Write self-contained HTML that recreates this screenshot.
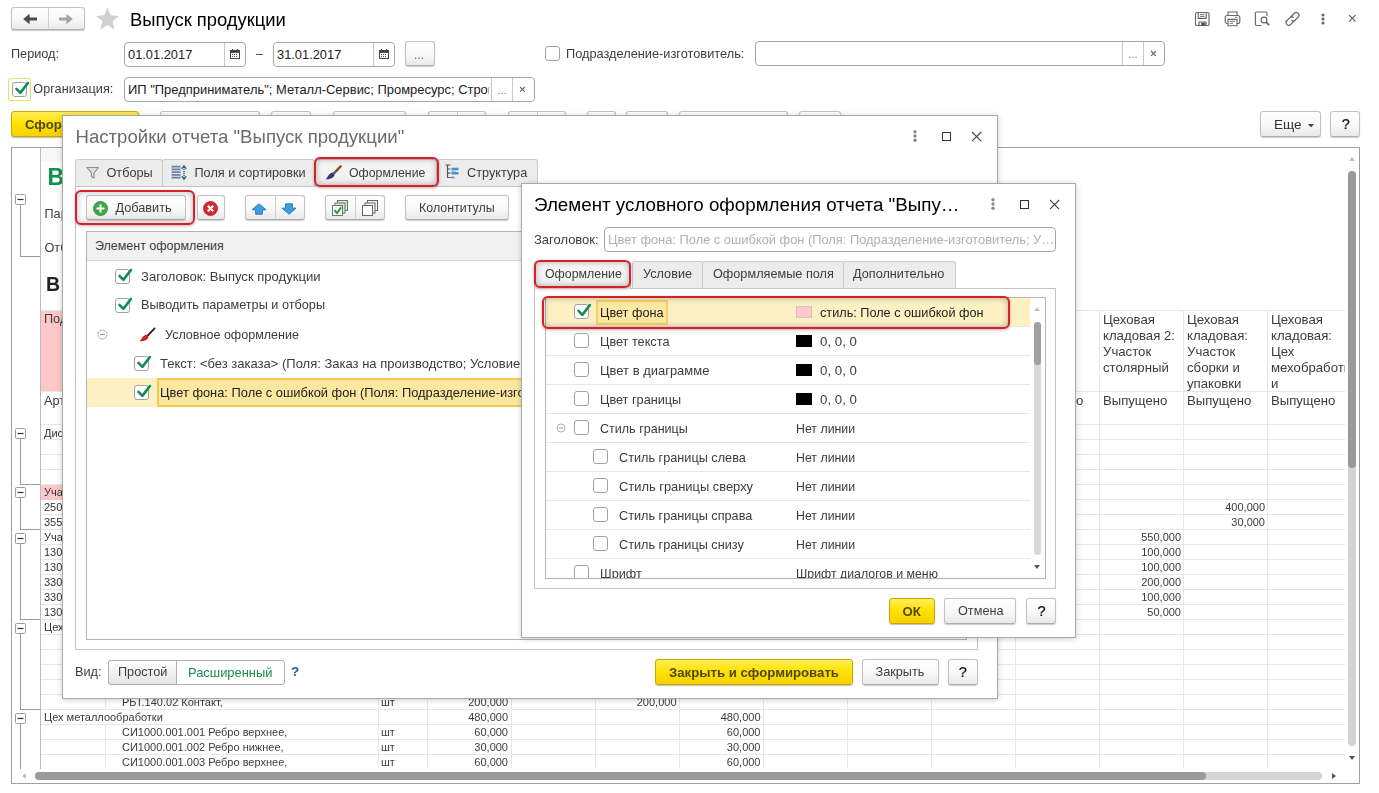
<!DOCTYPE html><html lang="ru"><head><meta charset="utf-8"><title>Выпуск продукции</title><style>
html,body{margin:0;padding:0;}
body{transform:translateZ(0);width:1379px;height:793px;overflow:hidden;background:#fff;position:relative;font-family:"Liberation Sans",sans-serif;font-size:12.7px;color:#3c3c3c;}
.a{position:absolute;box-sizing:border-box;}
.t{position:absolute;white-space:nowrap;}
.btn{position:absolute;box-sizing:border-box;border:1px solid #c2c2c2;border-bottom-color:#adadad;border-radius:3px;background:linear-gradient(#ffffff 0%,#f8f8f8 55%,#e9e9e9 100%);box-shadow:0 1px 1px rgba(0,0,0,.2);text-align:center;white-space:nowrap;}
.ybtn{position:absolute;box-sizing:border-box;border:1px solid #c9a800;border-radius:3px;background:linear-gradient(#ffee58 0%,#ffe205 45%,#f6d100 100%);box-shadow:0 1px 1px rgba(0,0,0,.25);text-align:center;white-space:nowrap;font-weight:bold;color:#54480a;}
.inp{position:absolute;box-sizing:border-box;border:1px solid #a6a6a6;border-radius:4px;background:#fff;}
.cb{position:absolute;box-sizing:border-box;border:1px solid #a2a2a2;border-radius:3px;background:#fff;width:15px;height:15px;}
.dlg{position:absolute;box-sizing:border-box;background:#fff;border:1px solid #a9a9a9;box-shadow:0 1px 6px rgba(0,0,0,.2);}
.tab{position:absolute;box-sizing:border-box;border:1px solid #cbcbcb;border-bottom:none;border-radius:3px 3px 0 0;background:#ececec;}
.red{position:absolute;box-sizing:border-box;border:2px solid #d2232a;border-radius:6px;box-shadow:0 1px 3px rgba(120,0,0,.35), inset 0 0 6px rgba(0,0,0,.3);}
.hl{position:absolute;height:1px;background:#e7e7e7;}
.vl{position:absolute;width:1px;background:#e7e7e7;}
.s{font-size:11px;}
</style></head><body>
<div class="btn" style="left:11px;top:7px;width:74px;height:23px;"></div>
<div class="a" style="left:48px;top:8px;width:1px;height:21px;background:#d0d0d0"></div>
<svg class="a" style="left:22px;top:12px" width="16" height="14" viewBox="0 0 16 14"><path d="M6 7 H15" stroke="#4a4a4a" stroke-width="3" fill="none"/><path d="M1.2 7 L7.6 1.8 V12.2 Z" fill="#4a4a4a"/></svg>
<svg class="a" style="left:58px;top:12px" width="16" height="14" viewBox="0 0 16 14"><path d="M1 7 H10" stroke="#a4a4a4" stroke-width="3" fill="none"/><path d="M14.8 7 L8.4 1.8 V12.2 Z" fill="#a4a4a4"/></svg>
<svg class="a" style="left:95px;top:7.3px" width="25" height="23" viewBox="0 0 25 23"><path d="M12.5 0.5 L15.6 8.3 L24 8.9 L17.5 14.3 L19.6 22.5 L12.5 18 L5.4 22.5 L7.5 14.3 L1 8.9 L9.4 8.3 Z" fill="#cfcfcf"/></svg>
<div class="t" style="left:130px;top:7.5px;font-size:18.4px;line-height:24px;color:#000">Выпуск продукции</div>
<svg class="a" style="left:1194px;top:10.5px" width="16" height="16" viewBox="0 0 16 16" fill="none" stroke="#686868" stroke-width="1.15"><rect x="1.5" y="1.5" width="13.5" height="13" rx="1.3"/><path d="M4.3 1.5 V7.3 H12.2 V1.5"/><path d="M6 3.6 H10.5 M6 5.4 H10.5" stroke-width="0.9"/><path d="M5 14.5 V11 H12 V14.5"/><rect x="7.2" y="11.6" width="4.2" height="2.9" fill="#555" stroke="none"/></svg>
<svg class="a" style="left:1224px;top:10.5px" width="17" height="16" viewBox="0 0 17 16" fill="none" stroke="#686868" stroke-width="1.15"><path d="M4 4.5 V1 H13 V4.5"/><rect x="1.2" y="4.5" width="14.6" height="8" rx="2"/><path d="M4 12.5 V8.3 H13 V14.7 H4 Z" fill="#fff"/><path d="M5.8 10.3 H11.2 M5.8 12.3 H9" stroke-width="0.9"/><path d="M11.2 6.3 H13.6" stroke-width="0.9"/></svg>
<svg class="a" style="left:1254px;top:10.5px" width="17" height="16" viewBox="0 0 17 16" fill="none" stroke="#686868" stroke-width="1.15"><path d="M13 5 V2.2 a1.2 1.2 0 0 0 -1.2 -1.2 H2.6 a1.2 1.2 0 0 0 -1.2 1.2 V13.3 a1.2 1.2 0 0 0 1.2 1.2 H7.5"/><circle cx="10" cy="9" r="2.9"/><path d="M12.2 11.2 L15 14.2" stroke-width="1.9"/></svg>
<svg class="a" style="left:1284px;top:10.5px" width="17" height="16" viewBox="0 0 17 16" fill="none" stroke="#686868" stroke-width="1.25" stroke-linecap="round"><path d="M6.2 6.4 L10.4 2.2 a2.55 2.55 0 0 1 3.6 0 l0.2 .2 a2.55 2.55 0 0 1 0 3.6 L11 9.2 a2.55 2.55 0 0 1 -3.3 .25"/><path d="M10.6 9.6 L6.6 13.6 a2.55 2.55 0 0 1 -3.6 0 l-.2 -.2 a2.55 2.55 0 0 1 0 -3.6 L6 6.6 a2.55 2.55 0 0 1 3.3 -.25"/></svg>
<svg class="a" style="left:1319.5px;top:10.5px" width="6" height="16" viewBox="0 0 6 16"><circle cx="3" cy="4" r="1.6" fill="#6a6a6a"/><circle cx="3" cy="8" r="1.6" fill="#6a6a6a"/><circle cx="3" cy="12" r="1.6" fill="#6a6a6a"/></svg>
<svg class="a" style="left:1347.2px;top:13.2px" width="10.6" height="10.6" viewBox="0 0 10.6 10.6"><path d="M2 2 L8.6 8.6 M8.6 2 L2 8.6" stroke="#666" stroke-width="1.2" fill="none"/></svg>
<div class="t" style="left:11px;top:45.5px;font-size:12.7px;line-height:17px;">Период:</div>
<div class="inp" style="left:124px;top:42px;width:121.7px;height:24.5px;"></div>
<div class="a" style="left:224px;top:42.5px;width:1px;height:23.5px;background:#c8c8c8"></div>
<div class="t" style="left:128px;top:45.5px;font-size:12.85px;line-height:17px;color:#222">01.01.2017</div>
<svg class="a" style="left:229.5px;top:49px" width="10" height="10" viewBox="0 0 10 10"><rect x="0.5" y="1.5" width="9" height="8" fill="#fff" stroke="#444" stroke-width="1"/><rect x="0.5" y="1.5" width="9" height="2.4" fill="#444"/><path d="M2.5 0 V2 M7.5 0 V2" stroke="#444" stroke-width="1.2"/><path d="M2 5.4 H8 M2 7.4 H8" stroke="#444" stroke-width="1" stroke-dasharray="1 1"/></svg>
<div class="t" style="left:256px;top:45.5px;font-size:12.7px;line-height:17px;">–</div>
<div class="inp" style="left:273px;top:42px;width:121.5px;height:24.5px;"></div>
<div class="a" style="left:373px;top:42.5px;width:1px;height:23.5px;background:#c8c8c8"></div>
<div class="t" style="left:277px;top:45.5px;font-size:12.85px;line-height:17px;color:#222">31.01.2017</div>
<svg class="a" style="left:378.5px;top:49px" width="10" height="10" viewBox="0 0 10 10"><rect x="0.5" y="1.5" width="9" height="8" fill="#fff" stroke="#444" stroke-width="1"/><rect x="0.5" y="1.5" width="9" height="2.4" fill="#444"/><path d="M2.5 0 V2 M7.5 0 V2" stroke="#444" stroke-width="1.2"/><path d="M2 5.4 H8 M2 7.4 H8" stroke="#444" stroke-width="1" stroke-dasharray="1 1"/></svg>
<div class="btn" style="left:405px;top:41px;width:29.5px;height:25px;"></div>
<div class="t" style="left:414px;top:46.5px;font-size:12px;line-height:16px;color:#777">...</div>
<div class="cb" style="left:545px;top:46px;width:15px;height:15px;"></div>
<div class="t" style="left:566px;top:45.5px;font-size:12.7px;line-height:17px;transform:scaleX(1.007);transform-origin:0 50%">Подразделение-изготовитель:</div>
<div class="inp" style="left:755px;top:41px;width:410px;height:24.5px;"></div>
<div class="a" style="left:1122px;top:42px;width:1px;height:22.5px;background:#c8c8c8"></div>
<div class="a" style="left:1143px;top:42px;width:1px;height:22.5px;background:#c8c8c8"></div>
<div class="t" style="left:1128.5px;top:47.0px;font-size:11px;line-height:14px;color:#777">...</div>
<svg class="a" style="left:1149.3px;top:48.9px" width="8.8" height="8.8" viewBox="0 0 8.8 8.8"><path d="M2 2 L6.800000000000001 6.800000000000001 M6.800000000000001 2 L2 6.800000000000001" stroke="#666" stroke-width="1.1" fill="none"/></svg>
<div class="a" style="left:8px;top:78px;width:23px;height:23px;border:1px solid #e6dc78;background:#fffef2;border-radius:2px"></div>
<div class="cb" style="left:12px;top:82px;width:15px;height:15px;"><svg class="a" style="left:-1px;top:-4px" width="19" height="19" viewBox="0 0 19 19"><path d="M4.5 9.9 L8.4 13.9 L15.9 4" fill="none" stroke="#118a58" stroke-width="2.6" stroke-linecap="round" stroke-linejoin="round"/></svg></div>
<div class="t" style="left:33.3px;top:81.0px;font-size:12.7px;line-height:17px;">Организация:</div>
<div class="inp" style="left:124px;top:77px;width:410.5px;height:24.5px;"></div>
<div class="a" style="left:491px;top:78px;width:1px;height:22.5px;background:#c8c8c8"></div>
<div class="a" style="left:512px;top:78px;width:1px;height:22.5px;background:#c8c8c8"></div>
<div class="t" style="left:128px;top:81px;width:361px;overflow:hidden;font-size:12.95px;line-height:17px;color:#222">ИП "Предприниматель"; Металл-Сервис; Промресурс; Строй</div>
<div class="t" style="left:497.5px;top:82.5px;font-size:11px;line-height:14px;color:#777">...</div>
<svg class="a" style="left:518.3000000000001px;top:84.89999999999999px" width="8.8" height="8.8" viewBox="0 0 8.8 8.8"><path d="M2 2 L6.800000000000001 6.800000000000001 M6.800000000000001 2 L2 6.800000000000001" stroke="#666" stroke-width="1.1" fill="none"/></svg>
<div class="ybtn" style="left:11px;top:111px;width:127.5px;height:26px;"></div>
<div class="t" style="left:25px;top:115.5px;font-size:13.2px;line-height:17px;font-weight:bold;color:#54480a">Сформировать</div>
<div class="btn" style="left:160px;top:111px;width:100px;height:25px;"></div>
<div class="btn" style="left:271px;top:111px;width:40px;height:25px;"></div>
<div class="btn" style="left:332.5px;top:111px;width:73.5px;height:25px;"></div>
<div class="btn" style="left:427.5px;top:111px;width:58.5px;height:25px;"></div>
<div class="a" style="left:457px;top:112px;width:1px;height:23px;background:#d0d0d0"></div>
<div class="btn" style="left:507.5px;top:111px;width:58.5px;height:25px;"></div>
<div class="a" style="left:537px;top:112px;width:1px;height:23px;background:#d0d0d0"></div>
<div class="btn" style="left:587px;top:111px;width:29px;height:25px;"></div>
<div class="btn" style="left:626px;top:111px;width:41.5px;height:25px;"></div>
<div class="btn" style="left:679px;top:111px;width:109px;height:25px;"></div>
<div class="btn" style="left:799px;top:111px;width:41.5px;height:25px;"></div>
<div class="btn" style="left:1260px;top:111px;width:61px;height:26px;"></div>
<div class="t" style="left:1274px;top:115.5px;font-size:13.6px;line-height:18px;color:#333">Еще</div>
<svg class="a" style="left:1308px;top:123.7px" width="6" height="3.6" viewBox="0 0 7 4"><path d="M0 0 H7 L3.5 4 Z" fill="#444"/></svg>
<div class="btn" style="left:1330px;top:111px;width:30px;height:26px;"></div>
<div class="t" style="left:1341.7px;top:115.3px;font-size:14.6px;line-height:19px;font-weight:normal;color:#111;-webkit-text-stroke:0.22px #111">?</div>
<div class="a" style="left:11px;top:147px;width:1349px;height:636.5px;border:1px solid #a0a0a0;background:#fff"></div>
<div class="a" style="left:41px;top:148px;width:60px;height:14px;background:#f8f8f8"></div>
<div class="a" style="left:40px;top:148px;width:1px;height:621px;background:#bcbcbc"></div>
<div class="hl" style="left:41px;top:424px;width:1304px"></div>
<div class="hl" style="left:41px;top:439px;width:1304px"></div>
<div class="hl" style="left:41px;top:454px;width:1304px"></div>
<div class="hl" style="left:41px;top:469px;width:1304px"></div>
<div class="hl" style="left:41px;top:484px;width:1304px"></div>
<div class="hl" style="left:41px;top:499px;width:1304px"></div>
<div class="hl" style="left:41px;top:514px;width:1304px"></div>
<div class="hl" style="left:41px;top:529px;width:1304px"></div>
<div class="hl" style="left:41px;top:544px;width:1304px"></div>
<div class="hl" style="left:41px;top:559px;width:1304px"></div>
<div class="hl" style="left:41px;top:574px;width:1304px"></div>
<div class="hl" style="left:41px;top:589px;width:1304px"></div>
<div class="hl" style="left:41px;top:604px;width:1304px"></div>
<div class="hl" style="left:41px;top:619px;width:1304px"></div>
<div class="hl" style="left:41px;top:634px;width:1304px"></div>
<div class="hl" style="left:41px;top:649px;width:1304px"></div>
<div class="hl" style="left:41px;top:664px;width:1304px"></div>
<div class="hl" style="left:41px;top:679px;width:1304px"></div>
<div class="hl" style="left:41px;top:694px;width:1304px"></div>
<div class="hl" style="left:41px;top:709px;width:1304px"></div>
<div class="hl" style="left:41px;top:724px;width:1304px"></div>
<div class="hl" style="left:41px;top:739px;width:1304px"></div>
<div class="hl" style="left:41px;top:754px;width:1304px"></div>
<div class="hl" style="left:41px;top:310px;width:1304px"></div>
<div class="hl" style="left:41px;top:391px;width:1304px"></div>
<div class="vl" style="left:105px;top:310px;height:458px"></div>
<div class="vl" style="left:378px;top:310px;height:458px"></div>
<div class="vl" style="left:427px;top:310px;height:458px"></div>
<div class="vl" style="left:511px;top:310px;height:458px"></div>
<div class="vl" style="left:595px;top:310px;height:458px"></div>
<div class="vl" style="left:679px;top:310px;height:458px"></div>
<div class="vl" style="left:763px;top:310px;height:458px"></div>
<div class="vl" style="left:847px;top:310px;height:458px"></div>
<div class="vl" style="left:931px;top:310px;height:458px"></div>
<div class="vl" style="left:1015px;top:310px;height:458px"></div>
<div class="vl" style="left:1099px;top:310px;height:458px"></div>
<div class="vl" style="left:1183px;top:310px;height:458px"></div>
<div class="vl" style="left:1267px;top:310px;height:458px"></div>
<div class="a" style="left:41px;top:311px;width:64px;height:80px;background:#ffc8c8"></div>
<div class="a" style="left:41px;top:484.5px;width:64px;height:15px;background:#ffc8c8"></div>
<div class="t" style="left:47.5px;top:162.0px;font-size:23px;line-height:30px;font-weight:bold;color:#0a9646">Выпуск продукции</div>
<div class="t" style="left:44.5px;top:205.5px;font-size:12.7px;line-height:17px;">Параметры:</div>
<div class="t" style="left:44.5px;top:240.0px;font-size:12.7px;line-height:17px;">Отбор:</div>
<div class="t" style="left:46px;top:271.5px;font-size:19.5px;line-height:25px;font-weight:bold;color:#222">В</div>
<div class="t" style="left:44px;top:310.5px;font-size:12.7px;line-height:17px;">Подразделение-изготовитель</div>
<div class="t" style="left:44px;top:392.5px;font-size:12.7px;line-height:17px;">Артикул</div>
<div class="t" style="left:44px;top:426.0px;font-size:11px;line-height:14px;color:#333">Диспетчерская</div>
<div class="t" style="left:44px;top:485.0px;font-size:11px;line-height:14px;color:#333">Участок</div>
<div class="t" style="left:44px;top:500.0px;font-size:11px;line-height:14px;color:#333">2500</div>
<div class="t" style="left:44px;top:515.0px;font-size:11px;line-height:14px;color:#333">3550</div>
<div class="t" style="left:44px;top:530.0px;font-size:11px;line-height:14px;color:#333">Участок</div>
<div class="t" style="left:44px;top:545.0px;font-size:11px;line-height:14px;color:#333">130</div>
<div class="t" style="left:44px;top:560.0px;font-size:11px;line-height:14px;color:#333">130</div>
<div class="t" style="left:44px;top:575.0px;font-size:11px;line-height:14px;color:#333">3301</div>
<div class="t" style="left:44px;top:590.0px;font-size:11px;line-height:14px;color:#333">3301</div>
<div class="t" style="left:44px;top:605.0px;font-size:11px;line-height:14px;color:#333">130</div>
<div class="t" style="left:44px;top:620.0px;font-size:11px;line-height:14px;color:#333">Цех сборки</div>
<div class="a" style="left:100px;top:710px;width:20px;height:14px;background:#fff"></div>
<div class="t" style="left:44px;top:710.0px;font-size:11px;line-height:14px;">Цех металлообработки</div>
<div class="t" style="left:122px;top:695.0px;font-size:11px;line-height:14px;">РБТ.140.02 Контакт,</div>
<div class="t" style="left:122px;top:725.0px;font-size:11px;line-height:14px;">СИ1000.001.001 Ребро верхнее,</div>
<div class="t" style="left:122px;top:740.0px;font-size:11px;line-height:14px;">СИ1000.001.002 Ребро нижнее,</div>
<div class="t" style="left:122px;top:755.0px;font-size:11px;line-height:14px;">СИ1000.001.003 Ребро верхнее,</div>
<div class="t" style="left:381px;top:695.0px;font-size:11px;line-height:14px;">шт</div>
<div class="t" style="left:381px;top:725.0px;font-size:11px;line-height:14px;">шт</div>
<div class="t" style="left:381px;top:740.0px;font-size:11px;line-height:14px;">шт</div>
<div class="t" style="left:381px;top:755.0px;font-size:11px;line-height:14px;">шт</div>
<div class="t" style="right:871px;top:695.0px;font-size:11px;line-height:14px;text-align:right;">200,000</div>
<div class="t" style="right:871px;top:710.0px;font-size:11px;line-height:14px;text-align:right;">480,000</div>
<div class="t" style="right:871px;top:725.0px;font-size:11px;line-height:14px;text-align:right;">60,000</div>
<div class="t" style="right:871px;top:740.0px;font-size:11px;line-height:14px;text-align:right;">30,000</div>
<div class="t" style="right:871px;top:755.0px;font-size:11px;line-height:14px;text-align:right;">60,000</div>
<div class="t" style="right:702.5px;top:695.0px;font-size:11px;line-height:14px;text-align:right;">200,000</div>
<div class="t" style="right:618.5px;top:710.0px;font-size:11px;line-height:14px;text-align:right;">480,000</div>
<div class="t" style="right:618.5px;top:725.0px;font-size:11px;line-height:14px;text-align:right;">60,000</div>
<div class="t" style="right:618.5px;top:740.0px;font-size:11px;line-height:14px;text-align:right;">30,000</div>
<div class="t" style="right:618.5px;top:755.0px;font-size:11px;line-height:14px;text-align:right;">60,000</div>
<div class="t" style="left:1103px;top:311.5px;font-size:13.2px;line-height:16px;max-width:242px;overflow:hidden">Цеховая</div>
<div class="t" style="left:1103px;top:327.5px;font-size:13.2px;line-height:16px;max-width:242px;overflow:hidden">кладовая 2:</div>
<div class="t" style="left:1103px;top:343.5px;font-size:13.2px;line-height:16px;max-width:242px;overflow:hidden">Участок</div>
<div class="t" style="left:1103px;top:359.5px;font-size:13.2px;line-height:16px;max-width:242px;overflow:hidden">столярный</div>
<div class="t" style="left:1103px;top:391.7px;font-size:13.1px;line-height:17px;">Выпущено</div>
<div class="t" style="left:1187px;top:311.5px;font-size:13.2px;line-height:16px;max-width:158px;overflow:hidden">Цеховая</div>
<div class="t" style="left:1187px;top:327.5px;font-size:13.2px;line-height:16px;max-width:158px;overflow:hidden">кладовая:</div>
<div class="t" style="left:1187px;top:343.5px;font-size:13.2px;line-height:16px;max-width:158px;overflow:hidden">Участок</div>
<div class="t" style="left:1187px;top:359.5px;font-size:13.2px;line-height:16px;max-width:158px;overflow:hidden">сборки и</div>
<div class="t" style="left:1187px;top:375.5px;font-size:13.2px;line-height:16px;max-width:158px;overflow:hidden">упаковки</div>
<div class="t" style="left:1187px;top:391.7px;font-size:13.1px;line-height:17px;">Выпущено</div>
<div class="t" style="left:1271px;top:311.5px;font-size:13.2px;line-height:16px;max-width:74px;overflow:hidden">Цеховая</div>
<div class="t" style="left:1271px;top:327.5px;font-size:13.2px;line-height:16px;max-width:74px;overflow:hidden">кладовая:</div>
<div class="t" style="left:1271px;top:343.5px;font-size:13.2px;line-height:16px;max-width:74px;overflow:hidden">Цех</div>
<div class="t" style="left:1271px;top:359.5px;font-size:13.2px;line-height:16px;max-width:74px;overflow:hidden">мехобработк</div>
<div class="t" style="left:1271px;top:375.5px;font-size:13.2px;line-height:16px;max-width:74px;overflow:hidden">и</div>
<div class="t" style="left:1271px;top:391.7px;font-size:13.1px;line-height:17px;">Выпущено</div>
<div class="t" style="left:1076px;top:391.7px;font-size:13.1px;line-height:17px;">о</div>
<div class="t" style="right:114px;top:500.0px;font-size:11px;line-height:14px;text-align:right;">400,000</div>
<div class="t" style="right:114px;top:515.0px;font-size:11px;line-height:14px;text-align:right;">30,000</div>
<div class="t" style="right:198px;top:530.0px;font-size:11px;line-height:14px;text-align:right;">550,000</div>
<div class="t" style="right:198px;top:545.0px;font-size:11px;line-height:14px;text-align:right;">100,000</div>
<div class="t" style="right:198px;top:560.0px;font-size:11px;line-height:14px;text-align:right;">100,000</div>
<div class="t" style="right:198px;top:575.0px;font-size:11px;line-height:14px;text-align:right;">200,000</div>
<div class="t" style="right:198px;top:590.0px;font-size:11px;line-height:14px;text-align:right;">100,000</div>
<div class="t" style="right:198px;top:605.0px;font-size:11px;line-height:14px;text-align:right;">50,000</div>
<div class="a" style="left:20px;top:205px;width:1px;height:51px;background:#9c9c9c"></div>
<div class="a" style="left:20px;top:256px;width:20px;height:1px;background:#9c9c9c"></div>
<svg class="a" style="left:15px;top:194px" width="11" height="11" viewBox="0 0 11 11"><rect x="0.5" y="0.5" width="10" height="10" rx="1" fill="#fff" stroke="#9c9c9c"/><path d="M2.5 5.5 H8.5" stroke="#333" stroke-width="1.2"/></svg>
<div class="a" style="left:20px;top:438px;width:1px;height:46px;background:#9c9c9c"></div>
<div class="a" style="left:20px;top:484px;width:20px;height:1px;background:#9c9c9c"></div>
<svg class="a" style="left:15px;top:428px" width="11" height="11" viewBox="0 0 11 11"><rect x="0.5" y="0.5" width="10" height="10" rx="1" fill="#fff" stroke="#9c9c9c"/><path d="M2.5 5.5 H8.5" stroke="#333" stroke-width="1.2"/></svg>
<div class="a" style="left:20px;top:497px;width:1px;height:32px;background:#9c9c9c"></div>
<div class="a" style="left:20px;top:529px;width:20px;height:1px;background:#9c9c9c"></div>
<svg class="a" style="left:15px;top:487px" width="11" height="11" viewBox="0 0 11 11"><rect x="0.5" y="0.5" width="10" height="10" rx="1" fill="#fff" stroke="#9c9c9c"/><path d="M2.5 5.5 H8.5" stroke="#333" stroke-width="1.2"/></svg>
<div class="a" style="left:20px;top:543px;width:1px;height:76px;background:#9c9c9c"></div>
<div class="a" style="left:20px;top:619px;width:20px;height:1px;background:#9c9c9c"></div>
<svg class="a" style="left:15px;top:533px" width="11" height="11" viewBox="0 0 11 11"><rect x="0.5" y="0.5" width="10" height="10" rx="1" fill="#fff" stroke="#9c9c9c"/><path d="M2.5 5.5 H8.5" stroke="#333" stroke-width="1.2"/></svg>
<div class="a" style="left:20px;top:633px;width:1px;height:76px;background:#9c9c9c"></div>
<div class="a" style="left:20px;top:709px;width:20px;height:1px;background:#9c9c9c"></div>
<svg class="a" style="left:15px;top:623px" width="11" height="11" viewBox="0 0 11 11"><rect x="0.5" y="0.5" width="10" height="10" rx="1" fill="#fff" stroke="#9c9c9c"/><path d="M2.5 5.5 H8.5" stroke="#333" stroke-width="1.2"/></svg>
<div class="a" style="left:20px;top:723px;width:1px;height:46px;background:#9c9c9c"></div>
<svg class="a" style="left:15px;top:713px" width="11" height="11" viewBox="0 0 11 11"><rect x="0.5" y="0.5" width="10" height="10" rx="1" fill="#fff" stroke="#9c9c9c"/><path d="M2.5 5.5 H8.5" stroke="#333" stroke-width="1.2"/></svg>
<div class="a" style="left:1348px;top:171px;width:8px;height:575px;background:#d4d4d4;border-radius:4px"></div>
<div class="a" style="left:1348px;top:171px;width:8px;height:296.5px;background:#9a9a9a;border-radius:4px"></div>
<svg class="a" style="left:1349px;top:157px" width="6" height="4" viewBox="0 0 6 4"><path d="M0 4 H6 L3 0 Z" fill="#c0c0c0"/></svg>
<svg class="a" style="left:1349px;top:756px" width="6" height="4" viewBox="0 0 6 4"><path d="M0 0 H6 L3 4 Z" fill="#555"/></svg>
<div class="a" style="left:35px;top:771.7px;width:1286.5px;height:8px;background:#d4d4d4;border-radius:4px"></div>
<div class="a" style="left:35px;top:771.7px;width:1171px;height:8px;background:#9a9a9a;border-radius:4px"></div>
<svg class="a" style="left:22px;top:773px" width="4" height="6" viewBox="0 0 4 6"><path d="M4 0 V6 L0 3 Z" fill="#c0c0c0"/></svg>
<svg class="a" style="left:1331.5px;top:773px" width="4" height="6" viewBox="0 0 4 6"><path d="M0 0 V6 L4 3 Z" fill="#555"/></svg>
<div class="dlg" style="left:62px;top:115px;width:935.5px;height:584px;"></div>
<div class="t" style="left:75.5px;top:125.0px;font-size:18.6px;line-height:24px;color:#6c6c6c">Настройки отчета "Выпуск продукции"</div>
<svg class="a" style="left:912px;top:128.4px" width="6" height="16" viewBox="0 0 6 16"><circle cx="3" cy="3.7" r="1.7" fill="#8a8a8a"/><circle cx="3" cy="8" r="1.7" fill="#8a8a8a"/><circle cx="3" cy="12.3" r="1.7" fill="#8a8a8a"/></svg>
<div class="a" style="left:942px;top:132px;width:9px;height:9px;border:1.3px solid #333"></div>
<svg class="a" style="left:970.4px;top:129.8px" width="13.2" height="13.2" viewBox="0 0 13.2 13.2"><path d="M2 2 L11.2 11.2 M11.2 2 L2 11.2" stroke="#444" stroke-width="1.1" fill="none"/></svg>
<div class="a" style="left:75px;top:186px;width:902.5px;height:463.5px;border:1px solid #c4c4c4;background:#fff"></div>
<div class="tab" style="left:75px;top:159px;width:88px;height:27px;"></div>
<div class="tab" style="left:162px;top:159px;width:153px;height:27px;"></div>
<div class="tab" style="left:437px;top:159px;width:100.5px;height:27px;"></div>
<div class="tab" style="left:315px;top:159px;width:122px;height:28px;background:linear-gradient(#f6f6f6,#efefef)"></div>
<svg class="a" style="left:85.5px;top:165.5px" width="14" height="14" viewBox="0 0 14 14"><path d="M1 1.5 H12.5 L8 6.8 V12 L5.5 10.8 V6.8 Z" fill="#e0e0e0" stroke="#8c8c8c" stroke-width="1.1" stroke-linejoin="round"/></svg>
<div class="t" style="left:106.5px;top:164.7px;font-size:12.7px;line-height:17px;">Отборы</div>
<svg class="a" style="left:170.5px;top:164.5px" width="17" height="15" viewBox="0 0 17 15"><path d="M0.6 1.6 H9.6 M0.6 4.35 H9.6 M0.6 7.1 H9.6 M0.6 9.85 H9.6 M0.6 12.6 H9.6" stroke="#64829f" stroke-width="1.55" fill="none"/><path d="M13 2 V13" stroke="#2a5a8a" stroke-width="1.3" stroke-dasharray="1.2 0.8" fill="none"/><path d="M10.8 3.8 L13 0.8 L15.2 3.8 M10.8 11.2 L13 14.2 L15.2 11.2" stroke="#2a5a8a" stroke-width="1.3" fill="none"/></svg>
<div class="t" style="left:194.5px;top:164.7px;font-size:12.7px;line-height:17px;">Поля и сортировки</div>
<svg class="a" style="left:325px;top:164.5px" width="17" height="15" viewBox="0 0 17 15"><path d="M15.6 1.4 L8.6 8.6" stroke="#86673c" stroke-width="2.6" stroke-linecap="round" fill="none"/><path d="M15.9 1.1 L9 8.9" stroke="#5a4224" stroke-width="0.9" fill="none"/><path d="M7.2 7.6 L9.6 10 C8.6 13 4.6 14.6 0.6 14.2 C3 12.8 3 9 7.2 7.6 Z" fill="#34347a"/></svg>
<div class="t" style="left:348.5px;top:164.7px;font-size:12.7px;line-height:17px;transform:scaleX(0.97);transform-origin:0 50%">Оформление</div>
<svg class="a" style="left:445px;top:164px" width="14" height="15" viewBox="0 0 14 15"><path d="M0.5 1 H5.5 M2.5 1 V13.5 H5.5 M2.5 5 H5.5 M2.5 9.2 H5.5" stroke="#555" stroke-width="1.2" fill="none"/><path d="M6.5 5 H13.5 M6.5 9.2 H13.5" stroke="#4a92cc" stroke-width="2.6" fill="none"/><path d="M6 7.1 H11" stroke="#8ab8e0" stroke-width="1.2" fill="none"/><path d="M6 13.5 H9.5" stroke="#4a92cc" stroke-width="1.6" fill="none"/></svg>
<div class="t" style="left:467px;top:164.7px;font-size:12.7px;line-height:17px;">Структура</div>
<div class="red" style="left:314px;top:156.5px;width:124.5px;height:30px;"></div>
<div class="btn" style="left:86px;top:195px;width:99.5px;height:25px;"></div>
<svg class="a" style="left:93px;top:200.5px" width="15" height="15" viewBox="0 0 15 15"><circle cx="7.5" cy="7.5" r="7" fill="#3aa845" stroke="#2a8a35" stroke-width="0.8"/><path d="M7.5 3.5 V11.5 M3.5 7.5 H11.5" stroke="#fff" stroke-width="2"/></svg>
<div class="t" style="left:115.5px;top:200.2px;font-size:12.7px;line-height:17px;">Добавить</div>
<div class="red" style="left:74.5px;top:190px;width:120.5px;height:35px;"></div>
<div class="btn" style="left:197px;top:195px;width:27.5px;height:25px;"></div>
<svg class="a" style="left:202.5px;top:200.5px" width="15" height="15" viewBox="0 0 15 15"><circle cx="7.5" cy="7.5" r="7" fill="#d62a30" stroke="#b01a20" stroke-width="0.8"/><path d="M4.8 4.8 L10.2 10.2 M10.2 4.8 L4.8 10.2" stroke="#fff" stroke-width="2.2"/></svg>
<div class="btn" style="left:245px;top:195px;width:59.5px;height:25px;"></div>
<div class="a" style="left:275px;top:196px;width:1px;height:23px;background:#d0d0d0"></div>
<svg class="a" style="left:251px;top:203px" width="16" height="12" viewBox="0 0 16 12"><path d="M8 0.8 L15 6.8 H11.4 V11.2 H4.6 V6.8 H1 Z" fill="#3aa0e6" stroke="#2274b4" stroke-width="0.9" stroke-linejoin="round"/></svg>
<svg class="a" style="left:280.5px;top:203px" width="16" height="12" viewBox="0 0 16 12"><path d="M8 11.2 L15 5.2 H11.4 V0.8 H4.6 V5.2 H1 Z" fill="#3aa0e6" stroke="#2274b4" stroke-width="0.9" stroke-linejoin="round"/></svg>
<div class="btn" style="left:325px;top:195px;width:59.5px;height:25px;"></div>
<div class="a" style="left:355px;top:196px;width:1px;height:23px;background:#d0d0d0"></div>
<svg class="a" style="left:332px;top:200px" width="17" height="16" viewBox="0 0 17 16"><g fill="#d4e6d4" stroke="#6a7a6a" stroke-width="1"><rect x="5.5" y="0.5" width="10" height="10"/><rect x="3" y="3" width="10" height="10"/><rect x="0.5" y="5.5" width="10" height="10" fill="#f4faf4"/></g><path d="M2.5 10.3 L5 13 L9.2 7.3" stroke="#2a9a40" stroke-width="2" fill="none"/></svg>
<svg class="a" style="left:362px;top:200px" width="17" height="16" viewBox="0 0 17 16"><g fill="#f4f4f4" stroke="#666" stroke-width="1"><rect x="5.5" y="0.5" width="10" height="10"/><rect x="3" y="3" width="10" height="10"/><rect x="0.5" y="5.5" width="10" height="10" fill="#fff"/></g></svg>
<div class="btn" style="left:405px;top:195px;width:103.5px;height:25px;"></div>
<div class="t" style="left:419px;top:200.3px;font-size:12.7px;line-height:17px;transform:scaleX(0.98);transform-origin:0 50%">Колонтитулы</div>
<div class="a" style="left:86px;top:230.5px;width:880.5px;height:409.5px;border:1px solid #b4b4b4;background:#fff"></div>
<div class="a" style="left:87px;top:231.5px;width:878.5px;height:29px;background:#f2f2f2;border-bottom:1px solid #d8d8d8"></div>
<div class="t" style="left:95px;top:238.2px;font-size:12.47px;line-height:16px;">Элемент оформления</div>
<div class="cb" style="left:115px;top:269px;width:15px;height:15px;"><svg class="a" style="left:-1px;top:-4px" width="19" height="19" viewBox="0 0 19 19"><path d="M4.5 9.9 L8.4 13.9 L15.9 4" fill="none" stroke="#118a58" stroke-width="2.6" stroke-linecap="round" stroke-linejoin="round"/></svg></div>
<div class="t" style="left:141px;top:268.2px;font-size:13.08px;line-height:17px;">Заголовок: Выпуск продукции</div>
<div class="cb" style="left:115px;top:298px;width:15px;height:15px;"><svg class="a" style="left:-1px;top:-4px" width="19" height="19" viewBox="0 0 19 19"><path d="M4.5 9.9 L8.4 13.9 L15.9 4" fill="none" stroke="#118a58" stroke-width="2.6" stroke-linecap="round" stroke-linejoin="round"/></svg></div>
<div class="t" style="left:141px;top:297.2px;font-size:12.7px;line-height:17px;">Выводить параметры и отборы</div>
<svg class="a" style="left:97px;top:329px" width="11" height="11" viewBox="0 0 11 11"><circle cx="5.5" cy="5.5" r="4.5" fill="#fff" stroke="#b0b0b0"/><path d="M3 5.5 H8" stroke="#999" stroke-width="1"/></svg>
<svg class="a" style="left:139px;top:326.5px" width="17" height="15" viewBox="0 0 17 15"><path d="M15.6 1.4 L8.6 8.6" stroke="#2c2420" stroke-width="1.7" stroke-linecap="round" fill="none"/><path d="M15.9 1.1 L9 8.9" stroke="#1a1410" stroke-width="0.9" fill="none"/><path d="M7.2 7.6 L9.6 10 C8.6 13 4.6 14.6 0.6 14.2 C3 12.8 3 9 7.2 7.6 Z" fill="#cc1f24"/></svg>
<div class="t" style="left:165px;top:326.6px;font-size:12.55px;line-height:16px;">Условное оформление</div>
<div class="cb" style="left:134px;top:356px;width:15px;height:15px;"><svg class="a" style="left:-1px;top:-4px" width="19" height="19" viewBox="0 0 19 19"><path d="M4.5 9.9 L8.4 13.9 L15.9 4" fill="none" stroke="#118a58" stroke-width="2.6" stroke-linecap="round" stroke-linejoin="round"/></svg></div>
<div class="t" style="left:160px;top:355px;width:362px;overflow:hidden;line-height:17px;font-size:13.0px">Текст: &lt;без заказа&gt; (Поля: Заказ на производство; Условие: Заказ на производство Не заполнено)</div>
<div class="a" style="left:87px;top:378px;width:878.5px;height:28.5px;background:#fdf1c4"></div>
<div class="a" style="left:156.5px;top:378px;width:809px;height:28.5px;background:#fbe7a0;border:2px solid #f2c94a"></div>
<div class="cb" style="left:134px;top:385px;width:15px;height:15px;"><svg class="a" style="left:-1px;top:-4px" width="19" height="19" viewBox="0 0 19 19"><path d="M4.5 9.9 L8.4 13.9 L15.9 4" fill="none" stroke="#118a58" stroke-width="2.6" stroke-linecap="round" stroke-linejoin="round"/></svg></div>
<div class="t" style="left:160px;top:384.3px;width:362px;overflow:hidden;line-height:17px;color:#222;font-size:12.87px">Цвет фона: Поле с ошибкой фон (Поля: Подразделение-изготовитель; Условие: ...)</div>
<div class="t" style="left:75px;top:663.5px;font-size:12.7px;line-height:17px;">Вид:</div>
<div class="a" style="left:108px;top:660px;width:177px;height:24.5px;border:1px solid #b0b0b0;border-radius:3px;background:#fff"></div>
<div class="a" style="left:108px;top:660px;width:68.5px;height:24.5px;border:1px solid #b0b0b0;border-radius:3px 0 0 3px;background:linear-gradient(#fff,#e4e4e4)"></div>
<div class="t" style="left:118px;top:663.8px;font-size:12.7px;line-height:17px;">Простой</div>
<div class="t" style="left:188px;top:663.8px;font-size:12.9px;line-height:17px;color:#1a8a50">Расширенный</div>
<div class="t" style="left:291px;top:663.3px;font-size:13.5px;line-height:18px;color:#24589a;font-weight:bold">?</div>
<div class="ybtn" style="left:655px;top:659px;width:197.5px;height:25.5px;"></div>
<div class="t" style="left:669px;top:663.7px;font-size:13.2px;line-height:17px;font-weight:bold;color:#54480a">Закрыть и сформировать</div>
<div class="btn" style="left:862px;top:659px;width:76.5px;height:25.5px;"></div>
<div class="t" style="left:875.5px;top:663.7px;font-size:12.7px;line-height:17px;">Закрыть</div>
<div class="btn" style="left:947.5px;top:659px;width:30px;height:25.5px;"></div>
<div class="t" style="left:958.7px;top:663.3px;font-size:14.6px;line-height:19px;font-weight:normal;color:#111;-webkit-text-stroke:0.22px #111">?</div>
<div class="dlg" style="left:521px;top:183px;width:555px;height:454.5px;"></div>
<div class="t" style="left:534px;top:193.0px;font-size:18.8px;line-height:24px;color:#000">Элемент условного оформления отчета "Выпу…</div>
<svg class="a" style="left:990px;top:196.4px" width="6" height="16" viewBox="0 0 6 16"><circle cx="3" cy="3.7" r="1.7" fill="#8a8a8a"/><circle cx="3" cy="8" r="1.7" fill="#8a8a8a"/><circle cx="3" cy="12.3" r="1.7" fill="#8a8a8a"/></svg>
<div class="a" style="left:1020px;top:199.5px;width:9px;height:9px;border:1.3px solid #333"></div>
<svg class="a" style="left:1048.4px;top:197.8px" width="13.2" height="13.2" viewBox="0 0 13.2 13.2"><path d="M2 2 L11.2 11.2 M11.2 2 L2 11.2" stroke="#444" stroke-width="1.1" fill="none"/></svg>
<div class="t" style="left:534px;top:231.5px;font-size:12.7px;line-height:17px;transform:scaleX(1.022);transform-origin:0 50%">Заголовок:</div>
<div class="inp" style="left:604px;top:227px;width:452px;height:24.5px;"></div>
<div class="t" style="left:608px;top:231px;width:447px;overflow:hidden;line-height:17px;color:#b0b0b0;font-size:12.87px">Цвет фона: Поле с ошибкой фон (Поля: Подразделение-изготовитель; У…</div>
<div class="a" style="left:534px;top:288px;width:522px;height:300.5px;border:1px solid #c4c4c4;background:#fff"></div>
<div class="tab" style="left:632px;top:261px;width:71px;height:27px;"></div>
<div class="tab" style="left:702px;top:261px;width:142px;height:27px;"></div>
<div class="tab" style="left:843px;top:261px;width:113px;height:27px;"></div>
<div class="tab" style="left:534px;top:261px;width:97px;height:28px;background:linear-gradient(#f8f8f8,#f1f1f1)"></div>
<div class="t" style="left:545px;top:266.0px;font-size:12.7px;line-height:17px;transform:scaleX(0.975);transform-origin:0 50%">Оформление</div>
<div class="t" style="left:643px;top:266.0px;font-size:12.7px;line-height:17px;">Условие</div>
<div class="t" style="left:713px;top:266.0px;font-size:12.7px;line-height:17px;">Оформляемые поля</div>
<div class="t" style="left:853px;top:266.0px;font-size:12.7px;line-height:17px;">Дополнительно</div>
<div class="red" style="left:534px;top:260px;width:96.5px;height:27.5px;"></div>
<div class="a" style="left:545px;top:297px;width:500.5px;height:281.5px;border:1px solid #b4b4b4;background:#fff;overflow:hidden"></div>
<div class="a" style="left:546px;top:298px;width:484px;height:28.5px;background:#fdf1c4"></div>
<div class="a" style="left:596px;top:299.5px;width:71.8px;height:25px;background:#fbe8a2;border:2px solid #f3d465"></div>
<div class="cb" style="left:574px;top:304px;width:15px;height:15px;"><svg class="a" style="left:-1px;top:-4px" width="19" height="19" viewBox="0 0 19 19"><path d="M4.5 9.9 L8.4 13.9 L15.9 4" fill="none" stroke="#118a58" stroke-width="2.6" stroke-linecap="round" stroke-linejoin="round"/></svg></div>
<div class="t" style="left:600px;top:304.7px;font-size:12.7px;line-height:17px;transform:scaleX(1.0000);transform-origin:0 50%;color:#222">Цвет фона</div>
<div class="a" style="left:796px;top:306px;width:16px;height:12px;background:#ffc8c8;border:1px solid #c8c8c8"></div>
<div class="t" style="left:820px;top:304.9px;font-size:12.7px;line-height:17px;color:#222">стиль: Поле с ошибкой фон</div>
<div class="hl" style="left:546px;top:355px;width:484px"></div>
<div class="cb" style="left:574px;top:333px;width:15px;height:15px;"></div>
<div class="t" style="left:600px;top:333.7px;font-size:12.7px;line-height:17px;transform:scaleX(1.0000);transform-origin:0 50%;">Цвет текста</div>
<div class="a" style="left:796px;top:335px;width:16px;height:11.5px;background:#000"></div>
<div class="t" style="left:820px;top:333.9px;font-size:12.7px;line-height:17px;transform:scaleX(1.047);transform-origin:0 50%">0, 0, 0</div>
<div class="hl" style="left:546px;top:384px;width:484px"></div>
<div class="cb" style="left:574px;top:362px;width:15px;height:15px;"></div>
<div class="t" style="left:600px;top:362.7px;font-size:12.7px;line-height:17px;transform:scaleX(1.0220);transform-origin:0 50%;">Цвет в диаграмме</div>
<div class="a" style="left:796px;top:364px;width:16px;height:11.5px;background:#000"></div>
<div class="t" style="left:820px;top:362.9px;font-size:12.7px;line-height:17px;transform:scaleX(1.047);transform-origin:0 50%">0, 0, 0</div>
<div class="hl" style="left:546px;top:413px;width:484px"></div>
<div class="cb" style="left:574px;top:391px;width:15px;height:15px;"></div>
<div class="t" style="left:600px;top:391.7px;font-size:12.7px;line-height:17px;transform:scaleX(1.0000);transform-origin:0 50%;">Цвет границы</div>
<div class="a" style="left:796px;top:393px;width:16px;height:11.5px;background:#000"></div>
<div class="t" style="left:820px;top:391.9px;font-size:12.7px;line-height:17px;transform:scaleX(1.047);transform-origin:0 50%">0, 0, 0</div>
<div class="hl" style="left:546px;top:442px;width:484px"></div>
<div class="cb" style="left:574px;top:420px;width:15px;height:15px;"></div>
<div class="t" style="left:600px;top:420.7px;font-size:12.7px;line-height:17px;transform:scaleX(0.9882);transform-origin:0 50%;">Стиль границы</div>
<div class="t" style="left:796px;top:420.9px;font-size:12.7px;line-height:17px;transform:scaleX(0.972);transform-origin:0 50%">Нет линии</div>
<div class="hl" style="left:546px;top:471px;width:484px"></div>
<div class="cb" style="left:593px;top:449px;width:15px;height:15px;"></div>
<div class="t" style="left:619px;top:449.7px;font-size:12.7px;line-height:17px;transform:scaleX(1.0000);transform-origin:0 50%;">Стиль границы слева</div>
<div class="t" style="left:796px;top:449.9px;font-size:12.7px;line-height:17px;transform:scaleX(0.972);transform-origin:0 50%">Нет линии</div>
<div class="hl" style="left:546px;top:500px;width:484px"></div>
<div class="cb" style="left:593px;top:478px;width:15px;height:15px;"></div>
<div class="t" style="left:619px;top:478.7px;font-size:12.7px;line-height:17px;transform:scaleX(1.0157);transform-origin:0 50%;">Стиль границы сверху</div>
<div class="t" style="left:796px;top:478.9px;font-size:12.7px;line-height:17px;transform:scaleX(0.972);transform-origin:0 50%">Нет линии</div>
<div class="hl" style="left:546px;top:529px;width:484px"></div>
<div class="cb" style="left:593px;top:507px;width:15px;height:15px;"></div>
<div class="t" style="left:619px;top:507.69999999999993px;font-size:12.7px;line-height:17px;transform:scaleX(1.0000);transform-origin:0 50%;">Стиль границы справа</div>
<div class="t" style="left:796px;top:507.9px;font-size:12.7px;line-height:17px;transform:scaleX(0.972);transform-origin:0 50%">Нет линии</div>
<div class="hl" style="left:546px;top:558px;width:484px"></div>
<div class="cb" style="left:593px;top:536px;width:15px;height:15px;"></div>
<div class="t" style="left:619px;top:536.6999999999999px;font-size:12.7px;line-height:17px;transform:scaleX(1.0000);transform-origin:0 50%;">Стиль границы снизу</div>
<div class="t" style="left:796px;top:536.9px;font-size:12.7px;line-height:17px;transform:scaleX(0.972);transform-origin:0 50%">Нет линии</div>
<div class="hl" style="left:546px;top:326px;width:484px"></div>
<svg class="a" style="left:556px;top:423px" width="10" height="10" viewBox="0 0 10 10"><circle cx="5" cy="5" r="4" fill="#fff" stroke="#b0b0b0"/><path d="M2.8 5 H7.2" stroke="#999" stroke-width="1"/></svg>
<div class="a" style="left:546px;top:559px;width:484px;height:18.5px;overflow:hidden"><div class="cb" style="left:28px;top:6px"></div><div class="t" style="left:54px;top:7px;line-height:17px">Шрифт</div><div class="t" style="left:250px;top:7px;line-height:17px;transform:scaleX(0.972);transform-origin:0 50%">Шрифт диалогов и меню</div></div>
<div class="a" style="left:1033.5px;top:322px;width:7px;height:233px;background:#d8d8d8;border-radius:4px"></div>
<div class="a" style="left:1033.5px;top:322px;width:7px;height:42.5px;background:#a0a0a0;border-radius:4px"></div>
<svg class="a" style="left:1034px;top:307px" width="6" height="4" viewBox="0 0 6 4"><path d="M0 4 H6 L3 0 Z" fill="#c0c0c0"/></svg>
<svg class="a" style="left:1034px;top:565px" width="6" height="4" viewBox="0 0 6 4"><path d="M0 0 H6 L3 4 Z" fill="#555"/></svg>
<div class="red" style="left:542px;top:295.5px;width:467.5px;height:33px;"></div>
<div class="ybtn" style="left:889px;top:598.3px;width:45.5px;height:25.3px;"></div>
<div class="t" style="left:902.5px;top:602.7px;font-size:13.2px;line-height:17px;font-weight:bold;color:#54480a">ОК</div>
<div class="btn" style="left:944px;top:598.3px;width:72px;height:25.3px;"></div>
<div class="t" style="left:958px;top:602.7px;font-size:12.7px;line-height:17px;">Отмена</div>
<div class="btn" style="left:1026px;top:598.3px;width:29.5px;height:25.3px;"></div>
<div class="t" style="left:1037.4px;top:602.3px;font-size:14.6px;line-height:19px;font-weight:normal;color:#111;-webkit-text-stroke:0.22px #111">?</div>
</body></html>
